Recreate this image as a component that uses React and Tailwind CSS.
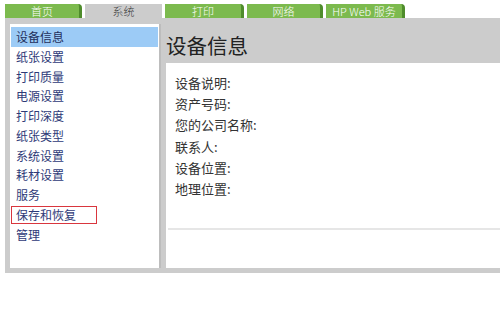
import React from 'react';

const tabs = [
  { label: '首页', w: 'w-[77px]', active: false },
  { label: '系统', w: 'w-[77px]', active: true },
  { label: '打印', w: 'w-[79px]', active: false },
  { label: '网络', w: 'w-[76px]', active: false },
  { label: 'HP Web 服务', w: 'w-[79px]', active: false },
];

const menu = [
  '设备信息',
  '纸张设置',
  '打印质量',
  '电源设置',
  '打印深度',
  '纸张类型',
  '系统设置',
  '耗材设置',
  '服务',
  '保存和恢复',
  '管理',
];

const fields = ['设备说明:', '资产号码:', '您的公司名称:', '联系人:', '设备位置:', '地理位置:'];

const App = () => {
  return (
    <div
      className="w-[500px] h-[327px] bg-white overflow-hidden"
      style={{ fontFamily: '"Microsoft YaHei", "Noto Sans CJK SC", "Liberation Sans", sans-serif' }}
    >
      {/* top tabs */}
      <div className="flex gap-[3px] pl-[5px] pt-[4px] h-[18px]">
        {tabs.map((t) =>
          t.active ? (
            <div
              key={t.label}
              className={`${t.w} h-[14px] bg-[#cccccc] text-[#333] text-[11px] font-light leading-[14px] text-center`}
            >
              {t.label}
            </div>
          ) : (
            <div
              key={t.label}
              className={`${t.w} h-[14px] bg-[#7cba4e] border-r-[3px] border-[#4f8c2c] rounded-tr-[4px] text-white text-[11px] font-light leading-[14px] text-center`}
            >
              {t.label}
            </div>
          )
        )}
      </div>

      {/* gray frame */}
      <div className="ml-[5px] h-[255px] bg-[#cccccc] flex pt-[6px] pb-[5px] pl-[5px] gap-[5px]">
        {/* sidebar */}
        <div className="w-[151px] bg-white border-r-[2px] border-[#bdbdbd] pt-[3px]">
          {menu.map((m, i) => (
            <div
              key={m}
              className={
                i === 0
                  ? 'ml-[1px] mr-[1px] h-[19.75px] leading-[19.75px] bg-[#9ccbf6] text-[#1f2f5c] text-[12px] pl-[5px]'
                  : i === 9
                  ? 'ml-[1px] w-[86px] h-[18px] my-[0.9px] leading-[16px] border-[1.5px] border-[#d9363e] text-[#2e3a78] text-[12px] pl-[4px]'
                  : 'h-[19.75px] leading-[19.75px] text-[#2e3a78] text-[12px] pl-[6px]'
              }
            >
              {m}
            </div>
          ))}
        </div>

        {/* main */}
        <div className="flex-1 flex flex-col">
          <div className="h-[39px] text-[20.5px] text-[#222] leading-[36px] pt-[3px]">
            设备信息
          </div>
          <div className="flex-1 bg-white pt-[9px] flex flex-col">
            <div className="pl-[9px]">
              {fields.map((f) => (
                <div key={f} className="h-[21.2px] leading-[21.2px] text-[13px] text-[#333]">
                  {f}
                </div>
              ))}
            </div>
            <div className="mt-[29px] ml-[2px] h-[2px] bg-[#e6e6e6]" />
          </div>
        </div>
      </div>
    </div>
  );
};

export default App;
